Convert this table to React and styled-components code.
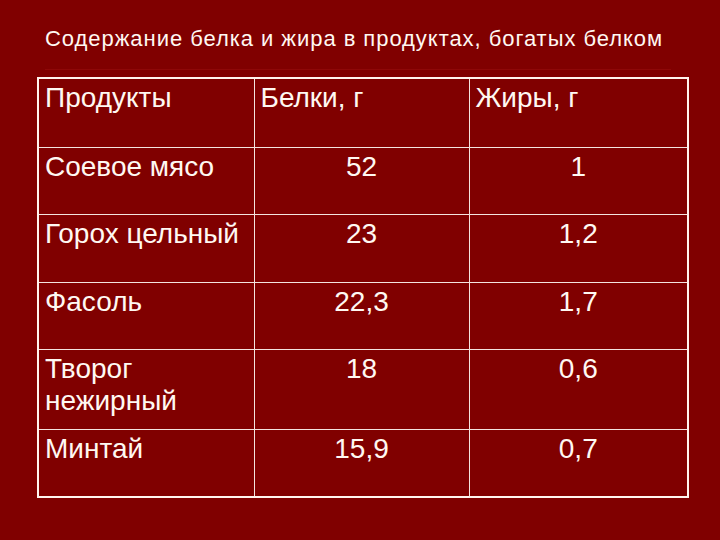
import React from 'react';
import styled, { createGlobalStyle } from 'styled-components';

const GlobalStyle = createGlobalStyle`
  html, body {
    margin: 0;
    padding: 0;
    background: #800000;
  }
  body {
    font-family: "Liberation Sans", Arial, sans-serif;
    color: #fff8f2;
  }
`;

const rows = [
  { name: 'Соевое мясо', protein: '52', fat: '1', height: 67 },
  { name: 'Горох цельный', protein: '23', fat: '1,2', height: 68 },
  { name: 'Фасоль', protein: '22,3', fat: '1,7', height: 67 },
  { name: 'Творог нежирный', protein: '18', fat: '0,6', height: 80 },
  { name: 'Минтай', protein: '15,9', fat: '0,7', height: 68 },
];

const Styled = {
  Slide: styled.div`
    display: flex;
    flex-flow: column;
    width: 720px;
    height: 540px;
    box-sizing: border-box;
    padding: 26px 0 0 37px;
  `,
  Title: styled.h1`
    width: 626px;
    margin: 0 0 7px 8px;
    padding-bottom: 17px;
    border-bottom: 1px solid #8e0808;
    font-size: 22px;
    font-weight: normal;
    line-height: 26px;
    letter-spacing: 0.95px;
    white-space: nowrap;
  `,
  Table: styled.table`
    width: 650px;
    border-collapse: collapse;
    table-layout: fixed;
    border: 2px solid #fff4ee;
  `,
  Cell: styled.td`
    box-sizing: border-box;
    height: ${({ $height }) => $height}px;
    padding: 3px 6px 2px;
    border: 1px solid #f4e4df;
    vertical-align: top;
    text-align: ${({ $center }) => ($center ? 'center' : 'left')};
    font-size: 28px;
    font-weight: normal;
    line-height: 32px;
  `,
};

function App() {
  return (
    <>
      <GlobalStyle />
      <Styled.Slide>
        <Styled.Title>
          Содержание белка и жира в продуктах, богатых белком
        </Styled.Title>
        <Styled.Table>
          <colgroup>
            <col style={{ width: 216 }} />
            <col style={{ width: 215 }} />
            <col style={{ width: 219 }} />
          </colgroup>
          <thead>
            <tr>
              <Styled.Cell as="th" $height={69}>Продукты</Styled.Cell>
              <Styled.Cell as="th" $height={69}>Белки, г</Styled.Cell>
              <Styled.Cell as="th" $height={69}>Жиры, г</Styled.Cell>
            </tr>
          </thead>
          <tbody>
            {rows.map((row) => (
              <tr key={row.name}>
                <Styled.Cell $height={row.height}>{row.name}</Styled.Cell>
                <Styled.Cell $height={row.height} $center>{row.protein}</Styled.Cell>
                <Styled.Cell $height={row.height} $center>{row.fat}</Styled.Cell>
              </tr>
            ))}
          </tbody>
        </Styled.Table>
      </Styled.Slide>
    </>
  );
}

export default App;
